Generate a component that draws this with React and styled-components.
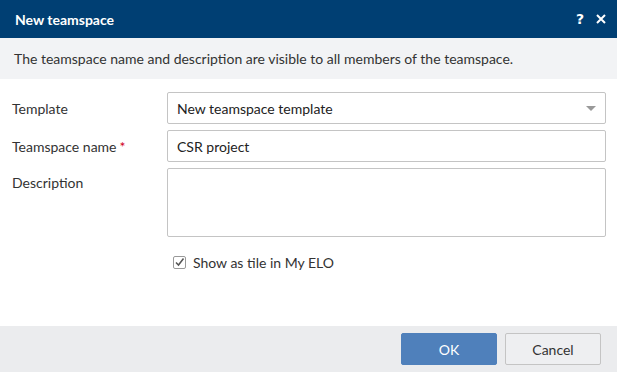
import React from "react";
import styled, { createGlobalStyle } from "styled-components";

const Global = createGlobalStyle`
  html, body { margin: 0; padding: 0; background: #fff; }
  body { font-family: Lato, "Noto Sans", sans-serif; color: #333; }
  * { box-sizing: border-box; }
`;

const Dialog = styled.div`
  width: 617px;
  height: 372px;
  display: flex;
  flex-direction: column;
  background: #fff;
`;

const Header = styled.div`
  height: 38px;
  background: #003f73;
  color: #fff;
  display: flex;
  align-items: center;
  padding: 0 15px;
`;

const Title = styled.div`
  flex: 1;
  font-size: 14px;
  font-weight: 700;
`;

const HeaderIcons = styled.div`
  display: flex;
  align-items: center;
  gap: 12px;
  font-size: 14px;
  font-weight: 700;
  font-family: "DejaVu Sans", sans-serif;
  margin-right: -4px;
`;

const Info = styled.div`
  height: 41px;
  background: #f2f3f5;
  display: flex;
  align-items: center;
  padding: 0 14px;
  font-size: 14px;
  color: #333;
`;

const Form = styled.div`
  flex: 1;
  padding: 13px 11px 0 12px;
  display: flex;
  flex-direction: column;
  gap: 6px;
`;

const Row = styled.div`
  display: grid;
  grid-template-columns: 155px 1fr;
  align-items: ${(p) => (p.$top ? "start" : "center")};
`;

const Label = styled.div`
  font-size: 14px;
  color: #333;
  padding-top: ${(p) => (p.$top ? "6px" : "0")};
`;

const Req = styled.span`
  color: #d0021b;
  margin-left: 3px;
`;

const Field = styled.div`
  height: ${(p) => p.$h || 32}px;
  border: 1px solid #c4c4c4;
  border-radius: 2px;
  background: #fff;
  display: flex;
  align-items: center;
  padding: 0 9px;
  font-size: 14px;
  color: #222;
`;

const Value = styled.div`
  flex: 1;
`;

const Caret = styled.div`
  width: 0;
  height: 0;
  border-left: 5px solid transparent;
  border-right: 5px solid transparent;
  border-top: 5px solid #999;
`;

const CheckRow = styled.div`
  display: flex;
  align-items: center;
  gap: 7px;
  margin-left: 161px;
  margin-top: 11px;
  font-size: 14px;
  color: #333;
`;

const Box = styled.div`
  width: 13px;
  height: 13px;
  border: 1px solid #999;
  border-radius: 2px;
  display: flex;
  align-items: center;
  justify-content: center;
`;

const Footer = styled.div`
  height: 46px;
  background: #ebecee;
  display: flex;
  justify-content: flex-end;
  align-items: center;
  gap: 8px;
  padding: 0 16px 0 0;
`;

const Button = styled.button`
  width: 96px;
  height: 32px;
  border-radius: 2px;
  font-family: inherit;
  font-size: 14px;
  border: 1px solid ${(p) => (p.$primary ? "#4f80bb" : "#c4c4c4")};
  background: ${(p) => (p.$primary ? "#4f80bb" : "#eeeff1")};
  color: ${(p) => (p.$primary ? "#fff" : "#333")};
`;

export default function App() {
  return (
    <>
      <Global />
      <Dialog>
        <Header>
          <Title>New teamspace</Title>
          <HeaderIcons>
            <span>?</span>
            <svg width="10" height="10" viewBox="0 0 10 10">
              <path d="M1 1L9 9M9 1L1 9" stroke="#fff" strokeWidth="2" />
            </svg>
          </HeaderIcons>
        </Header>
        <Info>The teamspace name and description are visible to all members of the teamspace.</Info>
        <Form>
          <Row>
            <Label>Template</Label>
            <Field>
              <Value>New teamspace template</Value>
              <Caret />
            </Field>
          </Row>
          <Row>
            <Label>
              Teamspace name<Req>*</Req>
            </Label>
            <Field>
              <Value>CSR project</Value>
            </Field>
          </Row>
          <Row $top>
            <Label $top>Description</Label>
            <Field $h={69} />
          </Row>
          <CheckRow>
            <Box>
              <svg width="11" height="11" viewBox="0 0 11 11">
                <path d="M2 5.5L4.5 8L9.5 1.5" stroke="#555" strokeWidth="1.5" fill="none" />
              </svg>
            </Box>
            <span>Show as tile in My ELO</span>
          </CheckRow>
        </Form>
        <Footer>
          <Button $primary>OK</Button>
          <Button>Cancel</Button>
        </Footer>
      </Dialog>
    </>
  );
}
